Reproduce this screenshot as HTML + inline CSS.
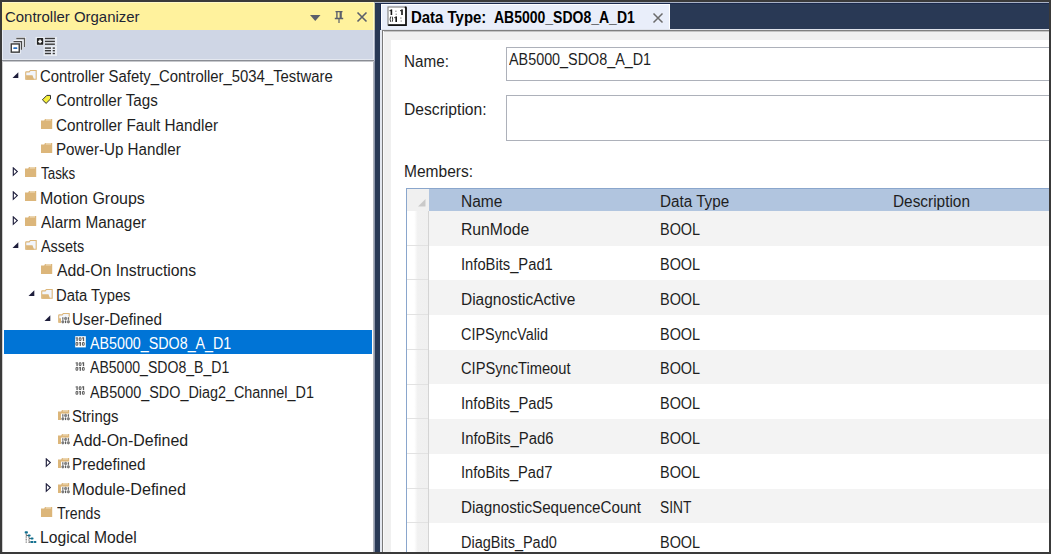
<!DOCTYPE html>
<html><head><meta charset="utf-8"><style>
html,body{margin:0;padding:0;width:1051px;height:554px;overflow:hidden;background:#3a3a3a;}
#root{position:relative;width:1051px;height:554px;overflow:hidden;}
</style></head><body><div id="root">
<div style="position:absolute;left:0px;top:0px;width:1051px;height:554px;background:#3a3a3a;"></div>
<div style="position:absolute;left:2px;top:2px;width:372px;height:550px;background:#ffffff;"></div>
<div style="position:absolute;left:2px;top:2px;width:372px;height:28px;background:#fff29d;"></div>
<div style="position:absolute;left:2px;top:2px;width:372px;height:1px;background:#fff8c8;"></div>
<div style="position:absolute;left:2px;top:30px;width:372px;height:30px;background:#cfd6e5;"></div>
<div style="position:absolute;left:2px;top:59px;width:372px;height:1px;background:#e4e8f0;"></div>
<div style="position:absolute;left:2px;top:60px;width:372px;height:1px;background:#8a8d94;"></div>
<div style="position:absolute;left:2px;top:61px;width:372px;height:1px;background:#c6c8cc;"></div>
<div style="position:absolute;left:2px;top:30px;width:1px;height:30px;background:#e8ecf4;"></div>
<div style="position:absolute;left:2px;top:61px;width:1px;height:491px;background:#d0d0d0;"></div>
<div style="position:absolute;left:373px;top:2px;width:1px;height:28px;background:#fffcc8;"></div>
<div style="position:absolute;left:373px;top:30px;width:1px;height:30px;background:#e4e8f0;"></div>
<div style="position:absolute;left:373px;top:62px;width:1px;height:490px;background:#b0b4bc;"></div>
<div style="position:absolute;left:5.4px;top:8.00px;font:normal 15px 'Liberation Sans', sans-serif;line-height:17.23px;color:#1e2535;white-space:pre;transform:scaleX(0.9963);transform-origin:0 0;">Controller Organizer</div>
<svg style="position:absolute;left:308px;top:12px" width="14" height="12" viewBox="0 0 14 12"><path d="M2 3 L12.5 3 L7.25 9 Z" fill="#5b5f6b"/></svg>
<svg style="position:absolute;left:332px;top:9px" width="14" height="16" viewBox="0 0 14 16"><path d="M3.5 2 H10.5 V3.2 H9.8 V8.8 H11.2 V10.2 H2.8 V8.8 H4.2 V3.2 H3.5 Z M5.6 3.2 V8.8 H7.6 V3.2 Z M6.4 10.2 H7.6 V14 H6.4 Z" fill="#5b5f6b"/></svg>
<svg style="position:absolute;left:355px;top:10px" width="14" height="14" viewBox="0 0 14 14"><path d="M2.5 2.5 L11.5 11.5 M11.5 2.5 L2.5 11.5" stroke="#5b5f6b" stroke-width="1.6"/></svg>
<svg style="position:absolute;left:5px;top:34px" width="25" height="24" viewBox="0 0 25 24"><g stroke="#f4f6fa" stroke-width="3" fill="none" opacity="0.9"><path d="M11.3 4.5 H19.5 V13"/><path d="M8.5 7.6 H16.5 V15.8"/><rect x="6.25" y="9.95" width="8" height="8.2"/></g>
<path d="M11.3 4.5 H19.5 V13" fill="none" stroke="#5a5a5a" stroke-width="1.3"/>
<path d="M8.5 7.6 H16.5 V15.8" fill="none" stroke="#4a4a4a" stroke-width="1.3"/>
<rect x="6.25" y="9.95" width="8" height="8.2" fill="#fff" stroke="#3a3a3a" stroke-width="1.4"/>
<rect x="8.3" y="13.3" width="4" height="1.7" rx="0.6" fill="#2a6fc0"/></svg>
<svg style="position:absolute;left:33px;top:34px" width="25" height="24" viewBox="0 0 25 24"><rect x="2.5" y="3" width="21.5" height="8.5" fill="#eef1f6" opacity="0.8"/><rect x="10.5" y="12" width="13.5" height="10" fill="#eef1f6" opacity="0.8"/>
<rect x="3.9" y="4.1" width="6.3" height="6.7" rx="0.6" fill="#222"/>
<path d="M7.05 5.6 V9.3 M5.2 7.45 H8.9" stroke="#fff" stroke-width="1.5"/>
<g fill="#3a3a3a"><rect x="11.9" y="3.8" width="10" height="1.4"/><rect x="11.9" y="6.7" width="10" height="1.4"/><rect x="11.9" y="9.5" width="10" height="1.4"/>
<rect x="11.9" y="13.4" width="6.1" height="1.4"/><rect x="11.9" y="16" width="6.1" height="1.4"/><rect x="11.9" y="18.8" width="6.1" height="1.4"/>
<rect x="19.7" y="13.4" width="2.2" height="1.4"/><rect x="19.7" y="16" width="2.2" height="1.4"/><rect x="19.7" y="18.8" width="2.2" height="1.4"/></g></svg>
<svg style="position:absolute;left:12px;top:72px" width="8" height="8" viewBox="0 0 8 8"><path d="M0.5 6.1 L6.3 6.1 L6.3 0.3 Z" fill="#1e1e3c"/></svg>
<svg style="position:absolute;left:24px;top:69px" width="14" height="14" viewBox="0 0 14 14"><path d="M1.7 10.3 V3.4 Q1.7 2.9 2.2 2.9 H5.2 L6.3 1.45 H12.2 V10.3 Z" fill="#f2f5fb" stroke="#dcb67a" stroke-width="1.1"/><path d="M2 6.2 H8.5 L10.2 10.85 H2.2 Z" fill="#dcb67a"/></svg>
<div style="position:absolute;left:39.67px;top:68.00px;font:normal 16px 'Liberation Sans', sans-serif;line-height:18.38px;color:#1e1e1e;white-space:pre;transform:scaleX(0.9296);transform-origin:0 0;">Controller Safety_Controller_5034_Testware</div>
<svg style="position:absolute;left:40px;top:93px" width="14" height="14" viewBox="0 0 14 14"><path d="M2.4 6.8 L6.8 2.4 H10.5 V6 L6.1 10.4 Z" fill="#f5ef3c" stroke="#333" stroke-width="1"/></svg>
<div style="position:absolute;left:56.15px;top:92.00px;font:normal 16px 'Liberation Sans', sans-serif;line-height:18.38px;color:#1e1e1e;white-space:pre;transform:scaleX(0.9491);transform-origin:0 0;">Controller Tags</div>
<svg style="position:absolute;left:40px;top:118px" width="14" height="14" viewBox="0 0 14 14"><path d="M1 2.6 H4.2 L5 0.9 H12.2 V11 H1 Z" fill="#dcb67a"/><path d="M5.8 1.9 H11" stroke="#f6ead2" stroke-width="1"/></svg>
<div style="position:absolute;left:56.15px;top:117.00px;font:normal 16px 'Liberation Sans', sans-serif;line-height:18.38px;color:#1e1e1e;white-space:pre;transform:scaleX(0.9538);transform-origin:0 0;">Controller Fault Handler</div>
<svg style="position:absolute;left:40px;top:142px" width="14" height="14" viewBox="0 0 14 14"><path d="M1 2.6 H4.2 L5 0.9 H12.2 V11 H1 Z" fill="#dcb67a"/><path d="M5.8 1.9 H11" stroke="#f6ead2" stroke-width="1"/></svg>
<div style="position:absolute;left:56.15px;top:141.00px;font:normal 16px 'Liberation Sans', sans-serif;line-height:18.38px;color:#1e1e1e;white-space:pre;transform:scaleX(0.9473);transform-origin:0 0;">Power-Up Handler</div>
<svg style="position:absolute;left:12px;top:167px" width="7" height="10" viewBox="0 0 7 10"><path d="M1.3 0.9 L5.3 4.6 L1.3 8.3 Z" fill="none" stroke="#1e1e3c" stroke-width="1.15"/></svg>
<svg style="position:absolute;left:24px;top:166px" width="14" height="14" viewBox="0 0 14 14"><path d="M1 2.6 H4.2 L5 0.9 H12.2 V11 H1 Z" fill="#dcb67a"/><path d="M5.8 1.9 H11" stroke="#f6ead2" stroke-width="1"/></svg>
<div style="position:absolute;left:40.6px;top:165.00px;font:normal 16px 'Liberation Sans', sans-serif;line-height:18.38px;color:#1e1e1e;white-space:pre;transform:scaleX(0.8366);transform-origin:0 0;">Tasks</div>
<svg style="position:absolute;left:12px;top:191px" width="7" height="10" viewBox="0 0 7 10"><path d="M1.3 0.9 L5.3 4.6 L1.3 8.3 Z" fill="none" stroke="#1e1e3c" stroke-width="1.15"/></svg>
<svg style="position:absolute;left:24px;top:190px" width="14" height="14" viewBox="0 0 14 14"><path d="M1 2.6 H4.2 L5 0.9 H12.2 V11 H1 Z" fill="#dcb67a"/><path d="M5.8 1.9 H11" stroke="#f6ead2" stroke-width="1"/></svg>
<div style="position:absolute;left:39.6px;top:190.00px;font:normal 16px 'Liberation Sans', sans-serif;line-height:18.38px;color:#1e1e1e;white-space:pre;transform:scaleX(0.9990);transform-origin:0 0;">Motion Groups</div>
<svg style="position:absolute;left:12px;top:216px" width="7" height="10" viewBox="0 0 7 10"><path d="M1.3 0.9 L5.3 4.6 L1.3 8.3 Z" fill="none" stroke="#1e1e3c" stroke-width="1.15"/></svg>
<svg style="position:absolute;left:24px;top:215px" width="14" height="14" viewBox="0 0 14 14"><path d="M1 2.6 H4.2 L5 0.9 H12.2 V11 H1 Z" fill="#dcb67a"/><path d="M5.8 1.9 H11" stroke="#f6ead2" stroke-width="1"/></svg>
<div style="position:absolute;left:40.6px;top:214.00px;font:normal 16px 'Liberation Sans', sans-serif;line-height:18.38px;color:#1e1e1e;white-space:pre;transform:scaleX(0.9606);transform-origin:0 0;">Alarm Manager</div>
<svg style="position:absolute;left:12px;top:242px" width="8" height="8" viewBox="0 0 8 8"><path d="M0.5 6.1 L6.3 6.1 L6.3 0.3 Z" fill="#1e1e3c"/></svg>
<svg style="position:absolute;left:24px;top:239px" width="14" height="14" viewBox="0 0 14 14"><path d="M1.7 10.3 V3.4 Q1.7 2.9 2.2 2.9 H5.2 L6.3 1.45 H12.2 V10.3 Z" fill="#f2f5fb" stroke="#dcb67a" stroke-width="1.1"/><path d="M2 6.2 H8.5 L10.2 10.85 H2.2 Z" fill="#dcb67a"/></svg>
<div style="position:absolute;left:40.6px;top:238.00px;font:normal 16px 'Liberation Sans', sans-serif;line-height:18.38px;color:#1e1e1e;white-space:pre;transform:scaleX(0.9000);transform-origin:0 0;">Assets</div>
<svg style="position:absolute;left:40px;top:263px" width="14" height="14" viewBox="0 0 14 14"><path d="M1 2.6 H4.2 L5 0.9 H12.2 V11 H1 Z" fill="#dcb67a"/><path d="M5.8 1.9 H11" stroke="#f6ead2" stroke-width="1"/></svg>
<div style="position:absolute;left:57.1px;top:262.00px;font:normal 16px 'Liberation Sans', sans-serif;line-height:18.38px;color:#1e1e1e;white-space:pre;transform:scaleX(0.9844);transform-origin:0 0;">Add-On Instructions</div>
<svg style="position:absolute;left:28px;top:290px" width="8" height="8" viewBox="0 0 8 8"><path d="M0.5 6.1 L6.3 6.1 L6.3 0.3 Z" fill="#1e1e3c"/></svg>
<svg style="position:absolute;left:40px;top:288px" width="14" height="14" viewBox="0 0 14 14"><path d="M1.7 10.3 V3.4 Q1.7 2.9 2.2 2.9 H5.2 L6.3 1.45 H12.2 V10.3 Z" fill="#f2f5fb" stroke="#dcb67a" stroke-width="1.1"/><path d="M2 6.2 H8.5 L10.2 10.85 H2.2 Z" fill="#dcb67a"/></svg>
<div style="position:absolute;left:56.18px;top:287.00px;font:normal 16px 'Liberation Sans', sans-serif;line-height:18.38px;color:#1e1e1e;white-space:pre;transform:scaleX(0.9238);transform-origin:0 0;">Data Types</div>
<svg style="position:absolute;left:44px;top:315px" width="8" height="8" viewBox="0 0 8 8"><path d="M0.5 6.1 L6.3 6.1 L6.3 0.3 Z" fill="#1e1e3c"/></svg>
<svg style="position:absolute;left:57px;top:312px" width="14" height="14" viewBox="0 0 14 14"><path d="M1.7 10.3 V3.4 Q1.7 2.9 2.2 2.9 H5.2 L6.3 1.45 H12.2 V10.3 Z" fill="#f2f5fb" stroke="#dcb67a" stroke-width="1.1"/><path d="M2 6.2 H4 V10.85 H2.2 Z" fill="#dcb67a"/><rect x="3.9999999999999996" y="4.6000000000000005" width="8.6" height="7.4" fill="#fff"/><rect x="5.30" y="5.20" width="1.1" height="2.6" fill="#555"/><rect x="7.50" y="5.30" width="2.2" height="2.4" rx="1" fill="#8a8a8a" stroke="#555" stroke-width="0.6"/><rect x="10.80" y="5.20" width="1.1" height="2.6" fill="#555"/><rect x="4.75" y="8.60" width="2.2" height="2.4" rx="1" fill="#8a8a8a" stroke="#555" stroke-width="0.6"/><rect x="8.05" y="8.50" width="1.1" height="2.6" fill="#555"/><rect x="10.25" y="8.60" width="2.2" height="2.4" rx="1" fill="#8a8a8a" stroke="#555" stroke-width="0.6"/></svg>
<div style="position:absolute;left:72.35px;top:311.00px;font:normal 16px 'Liberation Sans', sans-serif;line-height:18.38px;color:#1e1e1e;white-space:pre;transform:scaleX(0.9538);transform-origin:0 0;">User-Defined</div>
<div style="position:absolute;left:4px;top:330px;width:368px;height:24px;background:#0074d6;"></div>
<svg style="position:absolute;left:74px;top:336px" width="13" height="12" viewBox="0 0 13 12"><rect x="1.2" y="0.2" width="10.6" height="11.2" fill="#fff"/><rect x="2.43" y="1.20" width="1.30" height="3.91" fill="#5c5c5c"/><rect x="1.59" y="1.48" width="1.02" height="1.02" fill="#5c5c5c"/><rect x="5.22" y="1.71" width="1.77" height="2.88" rx="0.84" fill="none" stroke="#5c5c5c" stroke-width="1.02"/><rect x="8.85" y="1.20" width="1.30" height="3.91" fill="#5c5c5c"/><rect x="8.01" y="1.48" width="1.02" height="1.02" fill="#5c5c5c"/><rect x="2.01" y="6.45" width="1.77" height="2.88" rx="0.84" fill="none" stroke="#5c5c5c" stroke-width="1.02"/><rect x="5.64" y="5.94" width="1.30" height="3.91" fill="#5c5c5c"/><rect x="4.80" y="6.22" width="1.02" height="1.02" fill="#5c5c5c"/><rect x="8.43" y="6.45" width="1.77" height="2.88" rx="0.84" fill="none" stroke="#5c5c5c" stroke-width="1.02"/></svg>
<div style="position:absolute;left:89.8px;top:335.00px;font:normal 16px 'Liberation Sans', sans-serif;line-height:18.38px;color:#fff;white-space:pre;transform:scaleX(0.8924);transform-origin:0 0;">AB5000_SDO8_A_D1</div>
<svg style="position:absolute;left:74px;top:361px" width="13" height="12" viewBox="0 0 13 12"><rect x="2.43" y="1.20" width="1.30" height="3.91" fill="#5c5c5c"/><rect x="1.59" y="1.48" width="1.02" height="1.02" fill="#5c5c5c"/><rect x="5.22" y="1.71" width="1.77" height="2.88" rx="0.84" fill="none" stroke="#5c5c5c" stroke-width="1.02"/><rect x="8.85" y="1.20" width="1.30" height="3.91" fill="#5c5c5c"/><rect x="8.01" y="1.48" width="1.02" height="1.02" fill="#5c5c5c"/><rect x="2.01" y="6.45" width="1.77" height="2.88" rx="0.84" fill="none" stroke="#5c5c5c" stroke-width="1.02"/><rect x="5.64" y="5.94" width="1.30" height="3.91" fill="#5c5c5c"/><rect x="4.80" y="6.22" width="1.02" height="1.02" fill="#5c5c5c"/><rect x="8.43" y="6.45" width="1.77" height="2.88" rx="0.84" fill="none" stroke="#5c5c5c" stroke-width="1.02"/></svg>
<div style="position:absolute;left:89.8px;top:359.00px;font:normal 16px 'Liberation Sans', sans-serif;line-height:18.38px;color:#1e1e1e;white-space:pre;transform:scaleX(0.8797);transform-origin:0 0;">AB5000_SDO8_B_D1</div>
<svg style="position:absolute;left:74px;top:385px" width="13" height="12" viewBox="0 0 13 12"><rect x="2.43" y="1.20" width="1.30" height="3.91" fill="#5c5c5c"/><rect x="1.59" y="1.48" width="1.02" height="1.02" fill="#5c5c5c"/><rect x="5.22" y="1.71" width="1.77" height="2.88" rx="0.84" fill="none" stroke="#5c5c5c" stroke-width="1.02"/><rect x="8.85" y="1.20" width="1.30" height="3.91" fill="#5c5c5c"/><rect x="8.01" y="1.48" width="1.02" height="1.02" fill="#5c5c5c"/><rect x="2.01" y="6.45" width="1.77" height="2.88" rx="0.84" fill="none" stroke="#5c5c5c" stroke-width="1.02"/><rect x="5.64" y="5.94" width="1.30" height="3.91" fill="#5c5c5c"/><rect x="4.80" y="6.22" width="1.02" height="1.02" fill="#5c5c5c"/><rect x="8.43" y="6.45" width="1.77" height="2.88" rx="0.84" fill="none" stroke="#5c5c5c" stroke-width="1.02"/></svg>
<div style="position:absolute;left:89.8px;top:384.00px;font:normal 16px 'Liberation Sans', sans-serif;line-height:18.38px;color:#1e1e1e;white-space:pre;transform:scaleX(0.8992);transform-origin:0 0;">AB5000_SDO_Diag2_Channel_D1</div>
<svg style="position:absolute;left:57px;top:409px" width="14" height="14" viewBox="0 0 14 14"><path d="M1 2.6 H4.2 L5 0.9 H12.2 V11 H1 Z" fill="#dcb67a"/><path d="M5.8 1.9 H11" stroke="#f6ead2" stroke-width="1"/><rect x="3.9999999999999996" y="4.6000000000000005" width="8.6" height="7.4" fill="#fff"/><rect x="5.30" y="5.20" width="1.1" height="2.6" fill="#555"/><rect x="7.50" y="5.30" width="2.2" height="2.4" rx="1" fill="#8a8a8a" stroke="#555" stroke-width="0.6"/><rect x="10.80" y="5.20" width="1.1" height="2.6" fill="#555"/><rect x="4.75" y="8.60" width="2.2" height="2.4" rx="1" fill="#8a8a8a" stroke="#555" stroke-width="0.6"/><rect x="8.05" y="8.50" width="1.1" height="2.6" fill="#555"/><rect x="10.25" y="8.60" width="2.2" height="2.4" rx="1" fill="#8a8a8a" stroke="#555" stroke-width="0.6"/></svg>
<div style="position:absolute;left:72.37px;top:408.00px;font:normal 16px 'Liberation Sans', sans-serif;line-height:18.38px;color:#1e1e1e;white-space:pre;transform:scaleX(0.9327);transform-origin:0 0;">Strings</div>
<svg style="position:absolute;left:57px;top:433px" width="14" height="14" viewBox="0 0 14 14"><path d="M1 2.6 H4.2 L5 0.9 H12.2 V11 H1 Z" fill="#dcb67a"/><path d="M5.8 1.9 H11" stroke="#f6ead2" stroke-width="1"/><rect x="3.9999999999999996" y="4.6000000000000005" width="8.6" height="7.4" fill="#fff"/><rect x="5.30" y="5.20" width="1.1" height="2.6" fill="#555"/><rect x="7.50" y="5.30" width="2.2" height="2.4" rx="1" fill="#8a8a8a" stroke="#555" stroke-width="0.6"/><rect x="10.80" y="5.20" width="1.1" height="2.6" fill="#555"/><rect x="4.75" y="8.60" width="2.2" height="2.4" rx="1" fill="#8a8a8a" stroke="#555" stroke-width="0.6"/><rect x="8.05" y="8.50" width="1.1" height="2.6" fill="#555"/><rect x="10.25" y="8.60" width="2.2" height="2.4" rx="1" fill="#8a8a8a" stroke="#555" stroke-width="0.6"/></svg>
<div style="position:absolute;left:73.3px;top:432.00px;font:normal 16px 'Liberation Sans', sans-serif;line-height:18.38px;color:#1e1e1e;white-space:pre;transform:scaleX(0.9965);transform-origin:0 0;">Add-On-Defined</div>
<svg style="position:absolute;left:45px;top:458px" width="7" height="10" viewBox="0 0 7 10"><path d="M1.3 0.9 L5.3 4.6 L1.3 8.3 Z" fill="none" stroke="#1e1e3c" stroke-width="1.15"/></svg>
<svg style="position:absolute;left:57px;top:457px" width="14" height="14" viewBox="0 0 14 14"><path d="M1 2.6 H4.2 L5 0.9 H12.2 V11 H1 Z" fill="#dcb67a"/><path d="M5.8 1.9 H11" stroke="#f6ead2" stroke-width="1"/><rect x="3.9999999999999996" y="4.6000000000000005" width="8.6" height="7.4" fill="#fff"/><rect x="5.30" y="5.20" width="1.1" height="2.6" fill="#555"/><rect x="7.50" y="5.30" width="2.2" height="2.4" rx="1" fill="#8a8a8a" stroke="#555" stroke-width="0.6"/><rect x="10.80" y="5.20" width="1.1" height="2.6" fill="#555"/><rect x="4.75" y="8.60" width="2.2" height="2.4" rx="1" fill="#8a8a8a" stroke="#555" stroke-width="0.6"/><rect x="8.05" y="8.50" width="1.1" height="2.6" fill="#555"/><rect x="10.25" y="8.60" width="2.2" height="2.4" rx="1" fill="#8a8a8a" stroke="#555" stroke-width="0.6"/></svg>
<div style="position:absolute;left:72.35px;top:456.00px;font:normal 16px 'Liberation Sans', sans-serif;line-height:18.38px;color:#1e1e1e;white-space:pre;transform:scaleX(0.9500);transform-origin:0 0;">Predefined</div>
<svg style="position:absolute;left:45px;top:483px" width="7" height="10" viewBox="0 0 7 10"><path d="M1.3 0.9 L5.3 4.6 L1.3 8.3 Z" fill="none" stroke="#1e1e3c" stroke-width="1.15"/></svg>
<svg style="position:absolute;left:57px;top:482px" width="14" height="14" viewBox="0 0 14 14"><path d="M1 2.6 H4.2 L5 0.9 H12.2 V11 H1 Z" fill="#dcb67a"/><path d="M5.8 1.9 H11" stroke="#f6ead2" stroke-width="1"/><rect x="3.9999999999999996" y="4.6000000000000005" width="8.6" height="7.4" fill="#fff"/><rect x="5.30" y="5.20" width="1.1" height="2.6" fill="#555"/><rect x="7.50" y="5.30" width="2.2" height="2.4" rx="1" fill="#8a8a8a" stroke="#555" stroke-width="0.6"/><rect x="10.80" y="5.20" width="1.1" height="2.6" fill="#555"/><rect x="4.75" y="8.60" width="2.2" height="2.4" rx="1" fill="#8a8a8a" stroke="#555" stroke-width="0.6"/><rect x="8.05" y="8.50" width="1.1" height="2.6" fill="#555"/><rect x="10.25" y="8.60" width="2.2" height="2.4" rx="1" fill="#8a8a8a" stroke="#555" stroke-width="0.6"/></svg>
<div style="position:absolute;left:72.29px;top:481.00px;font:normal 16px 'Liberation Sans', sans-serif;line-height:18.38px;color:#1e1e1e;white-space:pre;transform:scaleX(1.0081);transform-origin:0 0;">Module-Defined</div>
<svg style="position:absolute;left:40px;top:506px" width="14" height="14" viewBox="0 0 14 14"><path d="M1 2.6 H4.2 L5 0.9 H12.2 V11 H1 Z" fill="#dcb67a"/><path d="M5.8 1.9 H11" stroke="#f6ead2" stroke-width="1"/></svg>
<div style="position:absolute;left:57.1px;top:505.00px;font:normal 16px 'Liberation Sans', sans-serif;line-height:18.38px;color:#1e1e1e;white-space:pre;transform:scaleX(0.8837);transform-origin:0 0;">Trends</div>
<svg style="position:absolute;left:24px;top:531px" width="14" height="14" viewBox="0 0 14 14"><path d="M2.2 1.5 V11.8 M5 4.5 V11.8" stroke="#555" stroke-width="1" stroke-dasharray="1 0.6"/><path d="M2.2 4.5 H5 M5 7.5 H8 M5 11 H8" stroke="#555" stroke-width="0.9"/><g fill="#0f6f8f"><rect x="0.7" y="0.3" width="3.2" height="2.2" rx="0.8"/><rect x="3.6" y="3.4" width="3" height="2.1" rx="0.8"/><rect x="6.5" y="6.5" width="3" height="2.1" rx="0.8"/><rect x="6.5" y="10" width="3" height="2.1" rx="0.8"/><rect x="9.8" y="10" width="2.6" height="2.1" rx="0.8"/></g></svg>
<div style="position:absolute;left:39.62px;top:529.00px;font:normal 16px 'Liberation Sans', sans-serif;line-height:18.38px;color:#1e1e1e;white-space:pre;transform:scaleX(0.9794);transform-origin:0 0;">Logical Model</div>
<div style="position:absolute;left:374px;top:2px;width:7px;height:550px;background:#293955;"></div>
<div style="position:absolute;left:374px;top:2px;width:1px;height:28px;background:#c9c7a0;"></div>
<div style="position:absolute;left:374px;top:30px;width:1px;height:31px;background:#a9b0c2;"></div>
<div style="position:absolute;left:374px;top:61px;width:1px;height:491px;background:#8e96aa;"></div>
<div style="position:absolute;left:381px;top:2px;width:668px;height:28px;background:#293955;"></div>
<div style="position:absolute;left:374px;top:2px;width:675px;height:1px;background:#a9b2c6;"></div>
<div style="position:absolute;left:375px;top:3px;width:674px;height:1px;background:#1b2a4d;"></div>
<div style="position:absolute;left:380px;top:3px;width:1px;height:27px;background:#1b2a4d;"></div>
<div style="position:absolute;left:381px;top:4px;width:289px;height:26px;background:#ffffff;"></div>
<div style="position:absolute;left:382px;top:5px;width:287px;height:25px;background:#e9eefa;"></div>
<svg style="position:absolute;left:387px;top:6px" width="21" height="21" viewBox="0 0 21 21"><rect x="1" y="1" width="18" height="18" fill="#fff" stroke="#888" stroke-width="1.2"/>
<path d="M19 1.5 V19.2 H1.2" fill="none" stroke="#111" stroke-width="1.7"/><rect x="17.6" y="0.4" width="2" height="2" rx="1" fill="#111"/><g fill="#151515"><rect x="3.6" y="3.4" width="1.6" height="5.6"/><rect x="2.6" y="4" width="1.2" height="1.2"/>
<rect x="14.2" y="3.4" width="1.6" height="5.6"/><rect x="13.2" y="4" width="1.2" height="1.2"/>
<rect x="8.4" y="10.4" width="1.6" height="5.6"/><rect x="7.4" y="11" width="1.2" height="1.2"/></g>
<g fill="#8a8a8a"><rect x="8.3" y="4.6" width="1.2" height="1.3"/><rect x="8.6" y="7.6" width="1.2" height="1.3"/>
<rect x="13.3" y="11.4" width="1.2" height="1.3"/><rect x="13.6" y="14.4" width="1.2" height="1.3"/></g>
<path d="M3.6 10.6 Q2.6 13.2 3.6 15.8 M5.2 10.6 Q6.2 13.2 5.2 15.8" fill="none" stroke="#333" stroke-width="1"/></svg>
<div style="position:absolute;left:411.17px;top:9.00px;font:bold 16px 'Liberation Sans', sans-serif;line-height:18.38px;color:#000;white-space:pre;transform:scaleX(0.9346);transform-origin:0 0;">Data Type:</div>
<div style="position:absolute;left:494.4px;top:9.00px;font:bold 16px 'Liberation Sans', sans-serif;line-height:18.38px;color:#000;white-space:pre;transform:scaleX(0.8745);transform-origin:0 0;">AB5000_SDO8_A_D1</div>
<svg style="position:absolute;left:651px;top:12px" width="14" height="12" viewBox="0 0 14 12"><path d="M2.5 1.5 L11.5 10.5 M11.5 1.5 L2.5 10.5" stroke="#6b6b6b" stroke-width="1.5"/></svg>
<div style="position:absolute;left:381px;top:29px;width:668px;height:1px;background:#dfe3ec;"></div>
<div style="position:absolute;left:381px;top:30px;width:668px;height:1px;background:#808080;"></div>
<div style="position:absolute;left:381px;top:31px;width:668px;height:521px;background:#f0f0f0;"></div>
<div style="position:absolute;left:381px;top:31px;width:668px;height:1px;background:#c4c4c4;"></div>
<div style="position:absolute;left:380px;top:30px;width:2px;height:522px;background:#e4e8f0;"></div>
<div style="position:absolute;left:382px;top:30px;width:1px;height:522px;background:#7a7a7a;"></div>
<div style="position:absolute;left:383px;top:31px;width:1px;height:521px;background:#fafafa;"></div>
<div style="position:absolute;left:391px;top:40px;width:658px;height:512px;background:#ffffff;"></div>
<div style="position:absolute;left:404.15px;top:53.00px;font:normal 16px 'Liberation Sans', sans-serif;line-height:18.38px;color:#1e1e1e;white-space:pre;transform:scaleX(0.9533);transform-origin:0 0;">Name:</div>
<div style="position:absolute;left:404.12px;top:101.00px;font:normal 16px 'Liberation Sans', sans-serif;line-height:18.38px;color:#1e1e1e;white-space:pre;transform:scaleX(0.9780);transform-origin:0 0;">Description:</div>
<div style="position:absolute;left:404.03px;top:163.00px;font:normal 16px 'Liberation Sans', sans-serif;line-height:18.38px;color:#1e1e1e;white-space:pre;transform:scaleX(0.9710);transform-origin:0 0;">Members:</div>
<div style="position:absolute;left:506px;top:47px;width:560px;height:34px;background:#ffffff;box-sizing:border-box;border:1px solid #adb1ba;"></div>
<div style="position:absolute;left:509.0px;top:51.00px;font:normal 16px 'Liberation Sans', sans-serif;line-height:18.38px;color:#1e1e1e;white-space:pre;transform:scaleX(0.8975);transform-origin:0 0;">AB5000_SDO8_A_D1</div>
<div style="position:absolute;left:506px;top:94.5px;width:560px;height:46px;background:#ffffff;box-sizing:border-box;border:1px solid #adb1ba;"></div>
<div style="position:absolute;left:406px;top:188px;width:700px;height:400px;background:#ffffff;box-sizing:border-box;border:1px solid #8aa6cc;"></div>
<div style="position:absolute;left:407px;top:189px;width:22px;height:22px;background:#f0f0f0;"></div>
<svg style="position:absolute;left:417px;top:198px" width="10" height="10" viewBox="0 0 10 10"><path d="M8.5 1 L8.5 8.5 L1 8.5 Z" fill="#c9c9c9"/></svg>
<div style="position:absolute;left:429px;top:189px;width:700px;height:22px;background:#b1c5df;"></div>
<div style="position:absolute;left:461.23px;top:193.00px;font:normal 16px 'Liberation Sans', sans-serif;line-height:18.38px;color:#1e1e1e;white-space:pre;transform:scaleX(0.9707);transform-origin:0 0;">Name</div>
<div style="position:absolute;left:659.75px;top:193.00px;font:normal 16px 'Liberation Sans', sans-serif;line-height:18.38px;color:#1e1e1e;white-space:pre;transform:scaleX(0.9521);transform-origin:0 0;">Data Type</div>
<div style="position:absolute;left:893.34px;top:193.00px;font:normal 16px 'Liberation Sans', sans-serif;line-height:18.38px;color:#1e1e1e;white-space:pre;transform:scaleX(0.9620);transform-origin:0 0;">Description</div>
<div style="position:absolute;left:429px;top:211.00px;width:700px;height:34.70px;background:#f3f3f3;"></div>
<div style="position:absolute;left:407px;top:211.00px;width:22px;height:34.70px;background:linear-gradient(to right,#ffffff 0%,#ffffff 33%,#f1f1f1 48%,#f0f0f0 100%);"></div>
<div style="position:absolute;left:407px;top:244.70px;width:22px;height:2px;background:#e2e2e2;"></div>
<div style="position:absolute;left:461.22px;top:221.00px;font:normal 16px 'Liberation Sans', sans-serif;line-height:18.38px;color:#1e1e1e;white-space:pre;transform:scaleX(0.9824);transform-origin:0 0;">RunMode</div>
<div style="position:absolute;left:659.6px;top:221.00px;font:normal 16px 'Liberation Sans', sans-serif;line-height:18.38px;color:#1e1e1e;white-space:pre;transform:scaleX(0.9023);transform-origin:0 0;">BOOL</div>
<div style="position:absolute;left:407px;top:245.70px;width:22px;height:34.70px;background:linear-gradient(to right,#ffffff 0%,#ffffff 33%,#f1f1f1 48%,#f0f0f0 100%);"></div>
<div style="position:absolute;left:407px;top:279.40px;width:22px;height:2px;background:#e2e2e2;"></div>
<div style="position:absolute;left:461.28px;top:256.00px;font:normal 16px 'Liberation Sans', sans-serif;line-height:18.38px;color:#1e1e1e;white-space:pre;transform:scaleX(0.9214);transform-origin:0 0;">InfoBits_Pad1</div>
<div style="position:absolute;left:659.6px;top:256.00px;font:normal 16px 'Liberation Sans', sans-serif;line-height:18.38px;color:#1e1e1e;white-space:pre;transform:scaleX(0.9023);transform-origin:0 0;">BOOL</div>
<div style="position:absolute;left:429px;top:280.40px;width:700px;height:34.70px;background:#f3f3f3;"></div>
<div style="position:absolute;left:407px;top:280.40px;width:22px;height:34.70px;background:linear-gradient(to right,#ffffff 0%,#ffffff 33%,#f1f1f1 48%,#f0f0f0 100%);"></div>
<div style="position:absolute;left:407px;top:314.10px;width:22px;height:2px;background:#e2e2e2;"></div>
<div style="position:absolute;left:461.23px;top:291.00px;font:normal 16px 'Liberation Sans', sans-serif;line-height:18.38px;color:#1e1e1e;white-space:pre;transform:scaleX(0.9667);transform-origin:0 0;">DiagnosticActive</div>
<div style="position:absolute;left:659.6px;top:291.00px;font:normal 16px 'Liberation Sans', sans-serif;line-height:18.38px;color:#1e1e1e;white-space:pre;transform:scaleX(0.9023);transform-origin:0 0;">BOOL</div>
<div style="position:absolute;left:407px;top:315.10px;width:22px;height:34.70px;background:linear-gradient(to right,#ffffff 0%,#ffffff 33%,#f1f1f1 48%,#f0f0f0 100%);"></div>
<div style="position:absolute;left:407px;top:348.80px;width:22px;height:2px;background:#e2e2e2;"></div>
<div style="position:absolute;left:461.3px;top:326.00px;font:normal 16px 'Liberation Sans', sans-serif;line-height:18.38px;color:#1e1e1e;white-space:pre;transform:scaleX(0.9011);transform-origin:0 0;">CIPSyncValid</div>
<div style="position:absolute;left:659.6px;top:326.00px;font:normal 16px 'Liberation Sans', sans-serif;line-height:18.38px;color:#1e1e1e;white-space:pre;transform:scaleX(0.9023);transform-origin:0 0;">BOOL</div>
<div style="position:absolute;left:429px;top:349.80px;width:700px;height:34.70px;background:#f3f3f3;"></div>
<div style="position:absolute;left:407px;top:349.80px;width:22px;height:34.70px;background:linear-gradient(to right,#ffffff 0%,#ffffff 33%,#f1f1f1 48%,#f0f0f0 100%);"></div>
<div style="position:absolute;left:407px;top:383.50px;width:22px;height:2px;background:#e2e2e2;"></div>
<div style="position:absolute;left:461.28px;top:360.00px;font:normal 16px 'Liberation Sans', sans-serif;line-height:18.38px;color:#1e1e1e;white-space:pre;transform:scaleX(0.9168);transform-origin:0 0;">CIPSyncTimeout</div>
<div style="position:absolute;left:659.6px;top:360.00px;font:normal 16px 'Liberation Sans', sans-serif;line-height:18.38px;color:#1e1e1e;white-space:pre;transform:scaleX(0.9023);transform-origin:0 0;">BOOL</div>
<div style="position:absolute;left:407px;top:384.50px;width:22px;height:34.70px;background:linear-gradient(to right,#ffffff 0%,#ffffff 33%,#f1f1f1 48%,#f0f0f0 100%);"></div>
<div style="position:absolute;left:407px;top:418.20px;width:22px;height:2px;background:#e2e2e2;"></div>
<div style="position:absolute;left:461.28px;top:395.00px;font:normal 16px 'Liberation Sans', sans-serif;line-height:18.38px;color:#1e1e1e;white-space:pre;transform:scaleX(0.9224);transform-origin:0 0;">InfoBits_Pad5</div>
<div style="position:absolute;left:659.6px;top:395.00px;font:normal 16px 'Liberation Sans', sans-serif;line-height:18.38px;color:#1e1e1e;white-space:pre;transform:scaleX(0.9023);transform-origin:0 0;">BOOL</div>
<div style="position:absolute;left:429px;top:419.20px;width:700px;height:34.70px;background:#f3f3f3;"></div>
<div style="position:absolute;left:407px;top:419.20px;width:22px;height:34.70px;background:linear-gradient(to right,#ffffff 0%,#ffffff 33%,#f1f1f1 48%,#f0f0f0 100%);"></div>
<div style="position:absolute;left:407px;top:452.90px;width:22px;height:2px;background:#e2e2e2;"></div>
<div style="position:absolute;left:461.27px;top:430.00px;font:normal 16px 'Liberation Sans', sans-serif;line-height:18.38px;color:#1e1e1e;white-space:pre;transform:scaleX(0.9296);transform-origin:0 0;">InfoBits_Pad6</div>
<div style="position:absolute;left:659.6px;top:430.00px;font:normal 16px 'Liberation Sans', sans-serif;line-height:18.38px;color:#1e1e1e;white-space:pre;transform:scaleX(0.9023);transform-origin:0 0;">BOOL</div>
<div style="position:absolute;left:407px;top:453.90px;width:22px;height:34.70px;background:linear-gradient(to right,#ffffff 0%,#ffffff 33%,#f1f1f1 48%,#f0f0f0 100%);"></div>
<div style="position:absolute;left:407px;top:487.60px;width:22px;height:2px;background:#e2e2e2;"></div>
<div style="position:absolute;left:461.28px;top:464.00px;font:normal 16px 'Liberation Sans', sans-serif;line-height:18.38px;color:#1e1e1e;white-space:pre;transform:scaleX(0.9163);transform-origin:0 0;">InfoBits_Pad7</div>
<div style="position:absolute;left:659.6px;top:464.00px;font:normal 16px 'Liberation Sans', sans-serif;line-height:18.38px;color:#1e1e1e;white-space:pre;transform:scaleX(0.9023);transform-origin:0 0;">BOOL</div>
<div style="position:absolute;left:429px;top:488.60px;width:700px;height:34.70px;background:#f3f3f3;"></div>
<div style="position:absolute;left:407px;top:488.60px;width:22px;height:34.70px;background:linear-gradient(to right,#ffffff 0%,#ffffff 33%,#f1f1f1 48%,#f0f0f0 100%);"></div>
<div style="position:absolute;left:407px;top:522.30px;width:22px;height:2px;background:#e2e2e2;"></div>
<div style="position:absolute;left:461.25px;top:499.00px;font:normal 16px 'Liberation Sans', sans-serif;line-height:18.38px;color:#1e1e1e;white-space:pre;transform:scaleX(0.9503);transform-origin:0 0;">DiagnosticSequenceCount</div>
<div style="position:absolute;left:659.64px;top:499.00px;font:normal 16px 'Liberation Sans', sans-serif;line-height:18.38px;color:#1e1e1e;white-space:pre;transform:scaleX(0.8611);transform-origin:0 0;">SINT</div>
<div style="position:absolute;left:407px;top:523.30px;width:22px;height:34.70px;background:linear-gradient(to right,#ffffff 0%,#ffffff 33%,#f1f1f1 48%,#f0f0f0 100%);"></div>
<div style="position:absolute;left:407px;top:557.00px;width:22px;height:2px;background:#e2e2e2;"></div>
<div style="position:absolute;left:461.3px;top:534.00px;font:normal 16px 'Liberation Sans', sans-serif;line-height:18.38px;color:#1e1e1e;white-space:pre;transform:scaleX(0.9048);transform-origin:0 0;">DiagBits_Pad0</div>
<div style="position:absolute;left:659.6px;top:534.00px;font:normal 16px 'Liberation Sans', sans-serif;line-height:18.38px;color:#1e1e1e;white-space:pre;transform:scaleX(0.9023);transform-origin:0 0;">BOOL</div>
<div style="position:absolute;left:428px;top:211px;width:1px;height:400px;background:#d4d4d4;"></div>
<div style="position:absolute;left:0px;top:552px;width:1051px;height:2px;background:#3a3a3a;"></div>
<div style="position:absolute;left:1049px;top:0px;width:2px;height:554px;background:#3a3a3a;"></div>
<div style="position:absolute;left:0px;top:0px;width:1051px;height:2px;background:#3a3a3a;"></div>
</div></body></html>
